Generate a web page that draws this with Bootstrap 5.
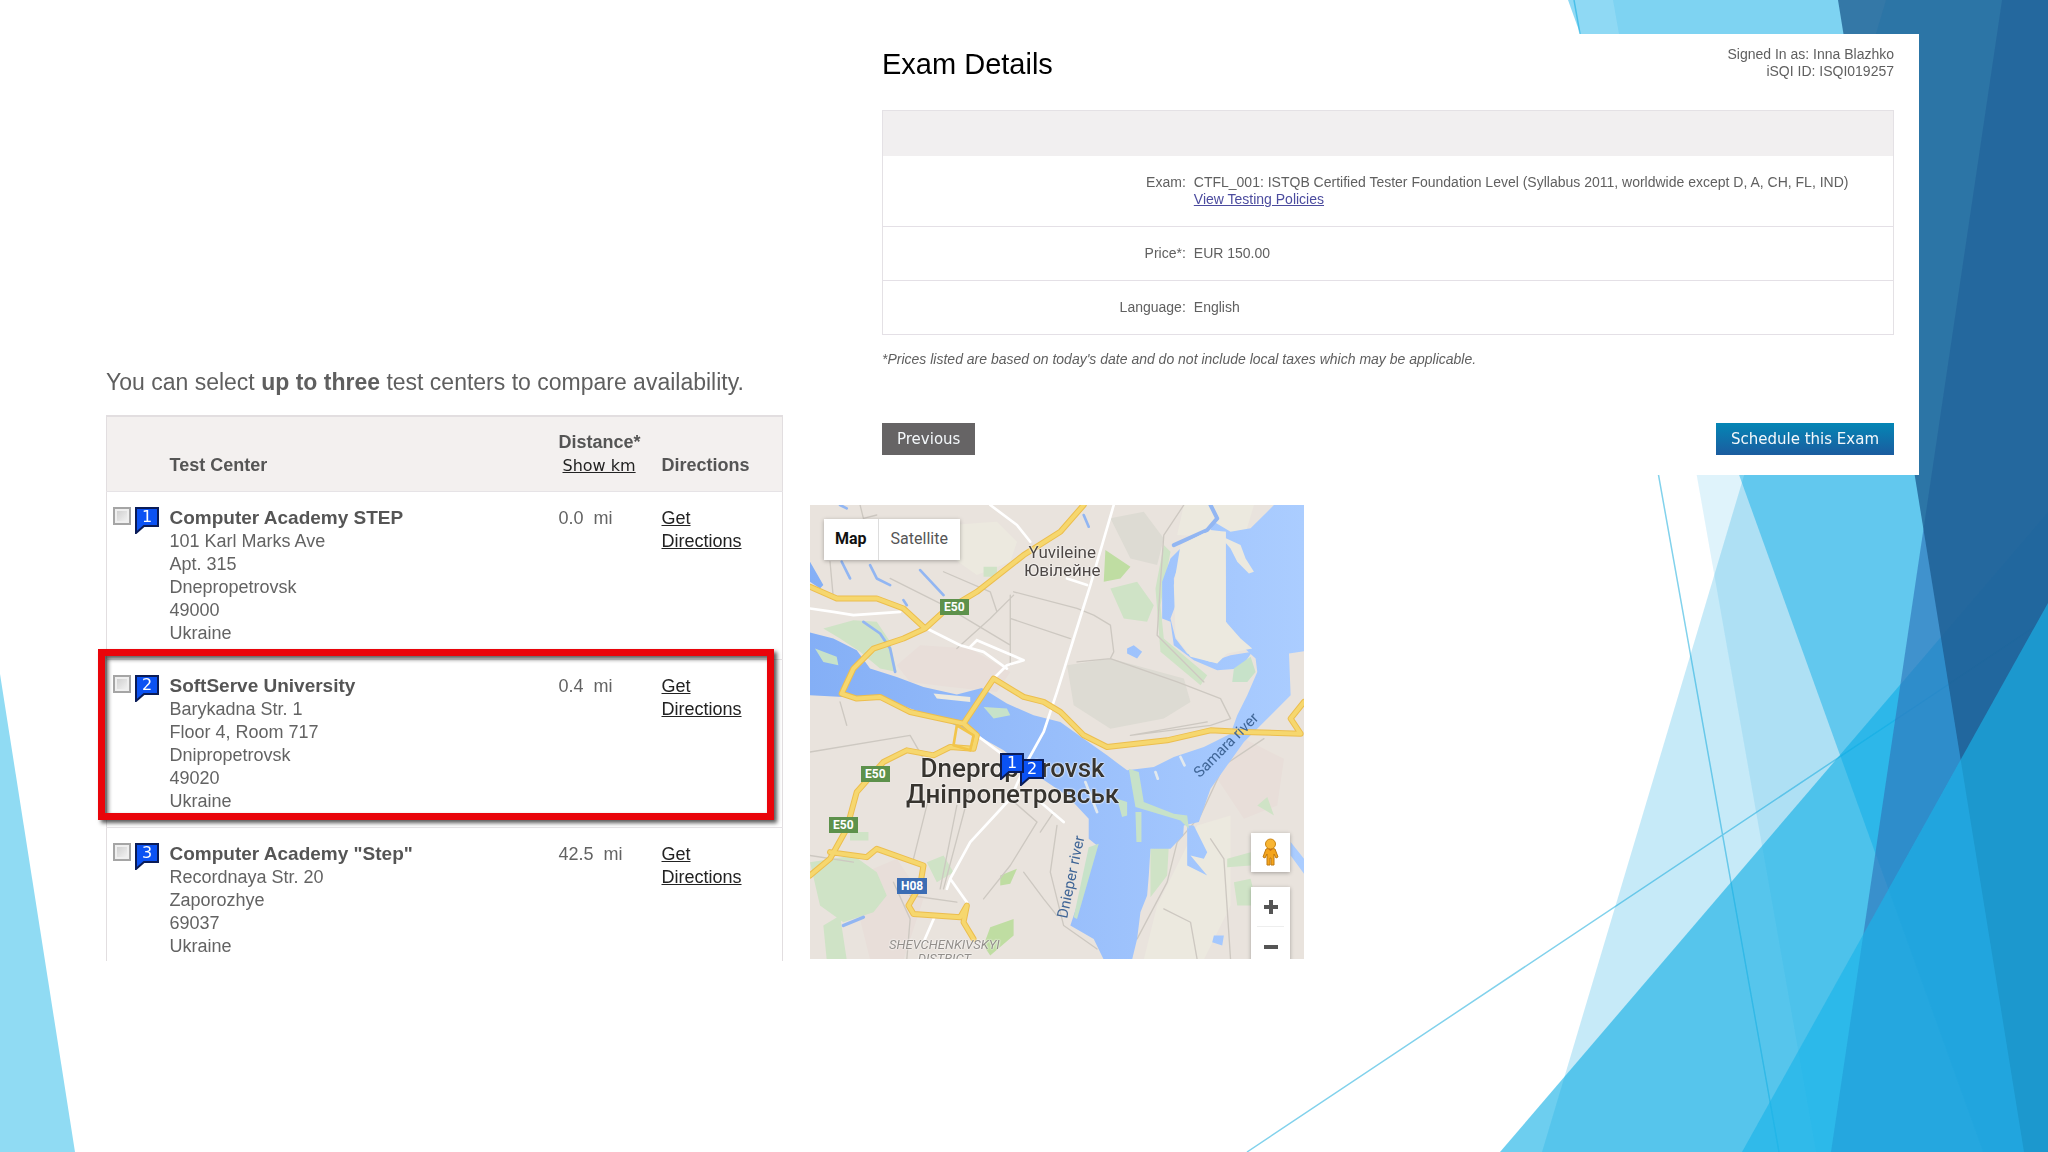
<!DOCTYPE html>
<html lang="en">
<head>
<meta charset="utf-8">
<meta name="viewport" content="width=device-width, initial-scale=1">
<title>Exam Details</title>
<link href="https://cdn.jsdelivr.net/npm/bootstrap@5.3.0/dist/css/bootstrap.min.css" rel="stylesheet">
<style>
  body { font-family: "Liberation Sans", Arial, sans-serif; background: #fff; color: #5f5f5f; }
  .backdrop { position: fixed; inset: 0; width: 100%; height: 100%; z-index: -1; }
  .slide { display: grid; grid-template-columns: minmax(0, 677fr) minmax(0, 1109fr); column-gap: 27px; padding: 34px 129px 0 106px; }

  /* exam panel */
  .exam-panel { background: #fff; margin-left: 52px; padding: 0 25px 20px 20px; font-size: 14px; line-height: 17px; }
  .exam-head { height: 76px; padding-top: 12px; }
  .exam-head h1 { font-size: 29px; line-height: 36px; color: #000; margin: 0; }
  .exam-table { border: 1px solid #e4e1e5; margin: 0; color: inherit; }
  .exam-table > :not(caption) > * > * { padding: 18px 0; border-bottom: 1px solid #e4e0e6; background: none; color: #606060; font-weight: 400; }
  .exam-table thead td { height: 45px; padding: 0 !important; background: #f1eff0 !important; border: 0; }
  .exam-table tbody th { width: 30%; text-align: right; }
  .exam-table tbody td { padding-left: 8px !important; }
  .exam-table a { color: #4b4b9e; }
  .exam-note { margin: 16px 0 55px; font-style: italic; }
  .btn-flat { border: 0; border-radius: 0; color: #f4f8fb; font: 15px/20px "DejaVu Sans", Verdana, sans-serif; padding: 6px 15px; }
  .btn-prev { background: #666465; }
  .btn-sched { background: linear-gradient(#0486b5, #1b5c9f); }
  .btn-flat:hover { color: #fff; }

  /* test center list */
  .centers { padding-top: 331px; }
  .centers-lead { font-size: 23px; line-height: 34px; margin: 0 0 16px; white-space: nowrap; }
  .centers-table { table-layout: fixed; font-size: 18px; line-height: 23px; margin: 0; border: solid #e2dee0; border-width: 2px 1px 0; color: inherit; }
  .centers-table > :not(caption) > * > * { padding: 15px 0 14px; border-bottom: 1px solid #e6e3e6; color: #636363; background: none; }
  .centers-table thead > tr > * { background: #f3f0ef !important; vertical-align: bottom; padding: 14px 0 14px !important; height: 74px; }
  .centers-table tbody tr:last-child > * { border-bottom: 0; padding-bottom: 3px; }
  .centers-table a { color: #222; }
  .centers-table strong, .centers-table th { color: #555; }
  .centers-table strong { font-size: 19px; line-height: 20px; }
  .col-pick { width: 63px; } .col-dist { width: 103px; } .col-dir { width: 121px; }
  .unit-link { font: 16px/23px "DejaVu Sans", Verdana, sans-serif; margin-left: 4px; }
  .pick-box { appearance: none; width: 18px; height: 18px; margin: 0; border: 2px solid #a5a5a5; background: linear-gradient(135deg, #c9c9c9, #f7f7f7); box-shadow: inset 0 0 0 2px #efefef; }
  .pick-box:checked { background: #1a53e8; }
  .pick { gap: 4px; padding-left: 6px; }
  .pin { display: block; width: 24px; height: 27px; overflow: visible; }
  .pin text { font: 16px "DejaVu Sans", sans-serif; fill: #fff; text-anchor: middle; }
  .spot { position: relative; }
  .spot-frame { position: absolute; left: -9px; top: -11px; width: 676px; max-width: calc(100vw - 100px); height: 171px; border: 7px solid #e9040a; pointer-events: none;
    box-shadow: 3px 3px 4px rgba(0,0,0,.65), inset 3px 3px 4px rgba(0,0,0,.65); }

  /* map */
  .map { position: relative; width: 100%; max-width: 494px; height: 454px; margin-top: 30px; overflow: hidden; background: #e9e4de; font-family: Roboto, sans-serif; }
  .map > svg { display: block; }
  .map-pos { position: absolute; white-space: nowrap; }
  .place { color: #4d4745; text-align: center; font-size: 17px; line-height: 18px; text-shadow: 0 0 2px #fff, 0 0 2px #fff; }
  .place-city { color: #37342f; font-size: 26px; line-height: 26px; font-weight: 500; }
  .place-district { color: #928e8a; font-size: 13px; line-height: 14px; font-style: italic; }
  .water { color: #3f6596; font-size: 15px; line-height: 16px; }
  .road { color: #fff; background: #5d914b; font-size: 12px; line-height: 16px; font-weight: 700; padding: 0 4px; }
  .road-h { background: #3c6db4; }
  .ctl { background: #fff; box-shadow: 0 1px 4px rgba(0,0,0,.3); }
  .ctl button { border: 0; background: #fff; color: #555; padding: 0; }
  .type-btns { left: 14px; top: 14px; }
  .type-btns button { height: 41px; font-size: 16px; padding: 0 11px; }
  .type-btns button + button { border-left: 1px solid #ddd; padding: 0 12px; }
  .type-btns .on { color: #111; font-weight: 700; }
  .peg { right: 14px; top: 328px; }
  .peg button { width: 39px; height: 39px; }
  .zoomer { right: 14px; top: 382px; }
  .zoomer button { width: 39px; height: 39px; }
  .zoomer hr { margin: 0 6px; width: 27px; color: #bbb; }
  @media (max-width: 1500px) { .slide { grid-template-columns: 1fr; padding: 34px 40px 40px; } .centers { padding-top: 30px; order: 2; } .exam-panel { margin-left: 0; } .centers-lead { white-space: normal; } }
</style>
</head>
<body>
<svg class="backdrop" viewBox="0 0 2048 1152" preserveAspectRatio="none" aria-hidden="true">
  <path d="M0 674L75 1152H0z" fill="#90dbf3"/>
  <path d="M1574 0L1779 1152M1247 1152L2048 618" stroke="#82d2ec" stroke-width="1.5" fill="none"/>
  <path d="M1886 0H2048V1152H1542z" fill="#1cade4" fill-opacity=".25"/>
  <path d="M1613 0H2048V1152H1816z" fill="#1cade4" fill-opacity=".14"/>
  <path d="M2048 512V1152H1500z" fill="rgb(16,175,229)" fill-opacity=".61"/>
  <path d="M1568 0H2048V1152H1983z" fill="rgb(6,170,230)" fill-opacity=".45"/>
  <path d="M2002 0H2048V1152H1831z" fill="rgb(47,118,187)" fill-opacity=".65"/>
  <path d="M1838 0H2048V1152H2024z" fill="rgb(29,92,144)" fill-opacity=".765"/>
  <path d="M2048 603V1152H1742z" fill="rgb(26,180,233)" fill-opacity=".64"/>
</svg>

<svg class="d-none">
  <symbol id="flag" viewBox="0 0 24 27"><path d="M1 1H23V19H9L1 26V19z" fill="#0b52f3" stroke="#0a1c58" stroke-width="2"/></symbol>
</svg>

<main class="slide">
  <section class="centers">
    <p class="centers-lead">You can select <strong>up to three</strong> test centers to compare availability.</p>
    <table class="table centers-table">
      <colgroup><col class="col-pick"><col><col class="col-dist"><col class="col-dir"></colgroup>
      <thead>
        <tr><td></td><th scope="col">Test Center</th><th scope="col">Distance*<br><a class="unit-link" href="#">Show km</a></th><th scope="col">Directions</th></tr>
      </thead>
      <tbody>
        <tr>
          <td><div class="pick d-flex"><input class="pick-box" type="checkbox" id="c1" aria-label="Computer Academy STEP"><svg class="pin"><use href="#flag"/><text x="12" y="15">1</text></svg></div></td>
          <td><label for="c1"><strong>Computer Academy STEP</strong><br>101 Karl Marks Ave<br>Apt. 315<br>Dnepropetrovsk<br>49000<br>Ukraine</label></td>
          <td>0.0 &nbsp;mi</td><td><a href="#">Get<br>Directions</a></td>
        </tr>
        <tr>
          <td class="spot"><span class="spot-frame"></span><div class="pick d-flex"><input class="pick-box" type="checkbox" id="c2" aria-label="SoftServe University"><svg class="pin"><use href="#flag"/><text x="12" y="15">2</text></svg></div></td>
          <td><label for="c2"><strong>SoftServe University</strong><br>Barykadna Str. 1<br>Floor 4, Room 717<br>Dnipropetrovsk<br>49020<br>Ukraine</label></td>
          <td>0.4 &nbsp;mi</td><td><a href="#">Get<br>Directions</a></td>
        </tr>
        <tr>
          <td><div class="pick d-flex"><input class="pick-box" type="checkbox" id="c3" aria-label="Computer Academy Step"><svg class="pin"><use href="#flag"/><text x="12" y="15">3</text></svg></div></td>
          <td><label for="c3"><strong>Computer Academy "Step"</strong><br>Recordnaya Str. 20<br>Zaporozhye<br>69037<br>Ukraine</label></td>
          <td>42.5 &nbsp;mi</td><td><a href="#">Get<br>Directions</a></td>
        </tr>
      </tbody>
    </table>
  </section>

  <div>
    <section class="exam-panel">
      <header class="exam-head d-flex justify-content-between">
        <h1>Exam Details</h1>
        <div class="text-end">Signed In as: Inna Blazhko<br>iSQI ID: ISQI019257</div>
      </header>
      <table class="table exam-table">
        <thead><tr><td colspan="2"></td></tr></thead>
        <tbody>
          <tr><th scope="row">Exam:</th><td>CTFL_001: ISTQB Certified Tester Foundation Level (Syllabus 2011, worldwide except D, A, CH, FL, IND)<br><a href="#">View Testing Policies</a></td></tr>
          <tr><th scope="row">Price*:</th><td>EUR 150.00</td></tr>
          <tr><th scope="row">Language:</th><td>English</td></tr>
        </tbody>
      </table>
      <p class="exam-note">*Prices listed are based on today's date and do not include local taxes which may be applicable.</p>
      <div class="d-flex justify-content-between">
        <button type="button" class="btn btn-flat btn-prev">Previous</button>
        <button type="button" class="btn btn-flat btn-sched">Schedule this Exam</button>
      </div>
    </section>

    <section class="map" aria-label="Map of test centers">
      <svg width="494" height="454" viewBox="0 0 1480 1362" preserveAspectRatio="xMinYMin slice" fill="none" stroke-linecap="round" stroke-linejoin="round">
        <defs><linearGradient id="wat" gradientUnits="userSpaceOnUse" x1="0" y1="0" x2="1480" y2="0"><stop offset="0" stop-color="#84aff6"/><stop offset=".5" stop-color="#98befb"/><stop offset="1" stop-color="#abcdff"/></linearGradient></defs>
        <path fill="#e9e3dd" d="M0 0H1480V1362H0z"/>
        <!-- built-up and open ground -->
        <path fill="#e8ded9" d="M260 480L330 420 480 430 600 500 560 560 420 545 300 530zM120 1120L260 1060 340 1180 280 1362 180 1362zM1180 760L1300 700 1420 760 1400 900 1300 940z"/>
        <path fill="#ece9df" d="M420 60L560 50 620 110 600 170 500 210 430 160zM1160 960L1260 930 1260 1200 1180 1362 1000 1362 1040 1200zM1120 0H1330L1300 100 1100 90z"/>
        <path fill="#dddbd3" d="M900 40L1000 20 1060 100 1040 180 960 160zM770 480L900 460 1120 520 1140 590 1060 640 900 670 790 600z"/>
        <g fill="#cfe3c6">
          <path d="M130 345L200 350 240 410 260 500 210 490 150 440 90 400 40 370z"/><path d="M15 430L80 455 85 480 40 470z"/>
          <path d="M0 1070L130 1050 200 1100 230 1170 190 1220 100 1250 30 1200zM40 1260L90 1230 110 1362H50z"/>
          <path d="M520 185h40v30h-40zM900 250L980 230 1030 300 1010 350 940 340zM1060 120L1080 140 1050 300 1060 400 1190 510 1170 540 1050 440 1035 250z"/>
          <path d="M1020 1030L1075 1020 1070 1110 1020 1175zM1250 1060L1320 1040 1320 1080 1250 1085zM1340 900L1370 875 1390 930zM1270 1130L1320 1120 1340 1200 1280 1200z"/>
          <path d="M350 1070L400 1050 430 1100 380 1130zM120 980h55v25h-55z"/>
        </g>
        <path fill="#bfdda2" d="M885 135L960 185 930 220 880 230zM540 1265L610 1240 610 1290 540 1350 520 1320zM570 1110L620 1090 600 1135 570 1140z"/>
        <!-- minor streets -->
        <g stroke="#cdc8c1" stroke-width="4">
          <path d="M150 0L160 40 200 30M60 170L70 280M240 220L400 300 600 420M400 200L540 260 560 320M600 270V480M610 260L800 310 850 330 900 360 910 440 900 460 800 470M600 340L780 400M440 430L540 340 610 270M900 460L1100 530 1230 580 1260 640 1200 660 960 690M1120 0L1060 90 1050 230 1040 390 1180 530M0 740L300 690 340 760 370 770M360 860L310 1060M440 900L390 1150M480 850L400 1150M600 880L680 950 600 1080 520 1180M690 980L730 920M640 1100L700 1180 740 1230M300 1170L440 1190M250 1130L300 1240 290 1362M740 960L720 1100 760 1260 860 1330M1360 700L1240 780 1170 930 1100 1010 1070 1130 980 1300M1060 1210L1140 1250 1160 1362M1200 1000L1240 1060 1260 1362M960 690L1190 650M0 1050L130 1070M90 590L110 660"/>
        </g>
        <!-- water -->
        <g fill="url(#wat)">
          <path d="M0 382L70 400 140 435 180 490 260 515 340 545 440 568 515 548 590 595 670 630 750 650 820 700 890 750 950 795 1030 785 1090 755 1180 725 1260 685 1280 630 1310 570 1340 500 1335 460 1270 400 1246 350V80L1200 75 1210 50 1260 80 1320 70 1370 20 1390 0H1480V438L1435 445 1440 570 1360 650 1300 710 1250 780 1200 850 1165 950 1120 960 1118 990 1080 1030 1020 1030 1015 1110 1010 1170 990 1220 980 1300 965 1362H880L850 1300 780 1260 860 1020 835 1000 835 940 770 870 650 790 580 735 500 690 390 640 300 610 210 575 100 575 0 570z"/>
          <path d="M1110 130L1125 125 1090 220 1095 300 1080 340 1095 400 1130 445 1200 470 1260 450 1325 440 1290 490 1220 495 1150 465 1090 420 1080 350 1055 340 1055 230 1080 160z"/>
          <path d="M1150 960L1190 1040 1180 1060 1140 1050 1190 1110 1130 1080 1130 960zM1440 1010L1480 1060V1105L1440 1050zM0 170L40 240 30 250 0 230zM950 430L970 420 995 440 980 460 950 445zM1210 1290L1240 1290 1235 1320 1205 1310z"/>
        </g>
        <g stroke="#92b6f2" stroke-width="8">
          <path d="M180 180L200 220 240 240M330 195L400 270M90 0L110 10M160 350L210 385 240 430 255 500M95 170L120 220M280 285L290 300M820 30L835 65" /><path d="M100 1260L160 1235" stroke-width="10"/><path d="M1090 120L1190 75 1220 40 1200 0" stroke-width="12"/>
        </g>
        <!-- islands and spits -->
        <g fill="#ece9df">
          <path d="M1110 120L1180 85 1245 80 1246 350 1290 400 1325 430 1250 445 1220 475 1140 455 1095 395 1090 240z"/>
          <path d="M1225 90L1290 120 1305 160 1330 200 1315 205 1280 170 1260 130zM370 565L480 575 480 590 380 580z"/>
        </g>
        <g fill="#c7e2c9"><path d="M520 605L590 610 600 630 550 640zM920 880L950 890 950 930 935 935zM975 920h18v90h-15zM955 790L985 800 1000 890 1090 925 1130 930 1135 970 1110 945 975 905zM15 430L80 455 85 480 40 470zM1270 490L1320 455 1335 500 1310 530 1265 530z"/><path d="M835 1025L865 1015 800 1240 790 1235z"/></g>
        <path d="M1035 800L1042 820M1110 755L1122 780M825 830L860 920" stroke="#e2e9ee" stroke-width="8"/>
        <!-- white roads -->
        <g stroke="#fff" stroke-width="8">
          <path d="M540 0L620 60 660 110M0 310L70 320 130 330 270 320M350 370L450 420 520 440 590 490M500 405L640 465 590 480 550 520M480 425L500 405M910 0L840 240 790 400 740 560 700 680 650 770 600 880 480 1010 420 1120 470 1190M420 1120L410 1150M375 1230L340 1310M690 890L760 950M500 690L580 750M770 220L830 240"/>
        </g>
        <!-- highways -->
        <g stroke="#ecbe4e" stroke-width="18">
          <path id="hw" d="M0 245L80 280 200 280 280 310 345 370M820 0L750 80 640 150 500 260 400 320 345 370 280 400 190 430 130 490 95 565 140 580 210 575 300 620 390 640 460 655 500 690 490 730 420 725 370 750 290 735 220 770 140 860 110 970 60 1060 0 1110M60 1040L170 1055 200 1030 340 1080 330 1140 295 1200 310 1225 450 1235 470 1200 460 1250 490 1300M460 655L550 520 640 575 700 590 750 620 820 690 890 725 1070 705 1200 675 1300 680 1470 685 1440 640 1480 590"/>
        </g>
        <use href="#hw" stroke="#f6d76e" stroke-width="12"/>
        <path d="M440 660L430 720 480 735 490 690z" stroke="#f2c54a" stroke-width="8"/>
      </svg>

      <div class="map-pos place" style="left:214px;top:38px">Yuvileine<br>Ювілейне</div>
      <div class="map-pos place place-city" style="left:96px;top:250px">Dnepropetrovsk<br>Дніпропетровськ</div>
      <div class="map-pos place place-district text-center" style="left:79px;top:433px">SHEVCHENKIVSKYI<br>DISTRICT</div>
      <div class="map-pos water" style="left:374px;top:232px;transform:rotate(-45deg)">Samara river</div>
      <div class="map-pos water" style="left:219px;top:364px;transform:rotate(-78deg)">Dnieper river</div>
      <span class="map-pos road" style="left:130px;top:94px">E50</span>
      <span class="map-pos road" style="left:51px;top:261px">E50</span>
      <span class="map-pos road" style="left:19px;top:312px">E50</span>
      <span class="map-pos road road-h" style="left:87px;top:373px">H08</span>
      <svg class="pin map-pos" style="left:210px;top:254px"><use href="#flag"/><text x="12" y="15">2</text></svg>
      <svg class="pin map-pos" style="left:190px;top:248px"><use href="#flag"/><text x="12" y="15">1</text></svg>

      <div class="map-pos ctl type-btns d-flex"><button type="button" class="on">Map</button><button type="button">Satellite</button></div>
      <div class="map-pos ctl peg"><button type="button" class="d-flex justify-content-center align-items-center" aria-label="Street View">
        <svg width="17" height="28" viewBox="0 0 17 28"><path d="M4 11Q8 9 13 11L16 19 14 20 12 16V27H9V20H8V27H5V16L3 20 1 19z" fill="#f5a51c" stroke="#c07a10"/><circle cx="8.5" cy="6" r="5" fill="#f8b533" stroke="#c98514"/><path d="M6 11L8.5 13 11 11z" fill="#c9701a"/></svg></button></div>
      <div class="map-pos ctl zoomer"><button type="button" class="d-block" aria-label="Zoom in"><svg width="16" height="16"><path d="M8 1V15M1 8H15" stroke="#555" stroke-width="4"/></svg></button><hr><button type="button" class="d-block" aria-label="Zoom out"><svg width="16" height="16"><path d="M1 8H15" stroke="#555" stroke-width="4"/></svg></button></div>
    </section>
  </div>
</main>
<script src="https://cdn.jsdelivr.net/npm/bootstrap@5.3.0/dist/js/bootstrap.bundle.min.js"></script>
</body>
</html>
